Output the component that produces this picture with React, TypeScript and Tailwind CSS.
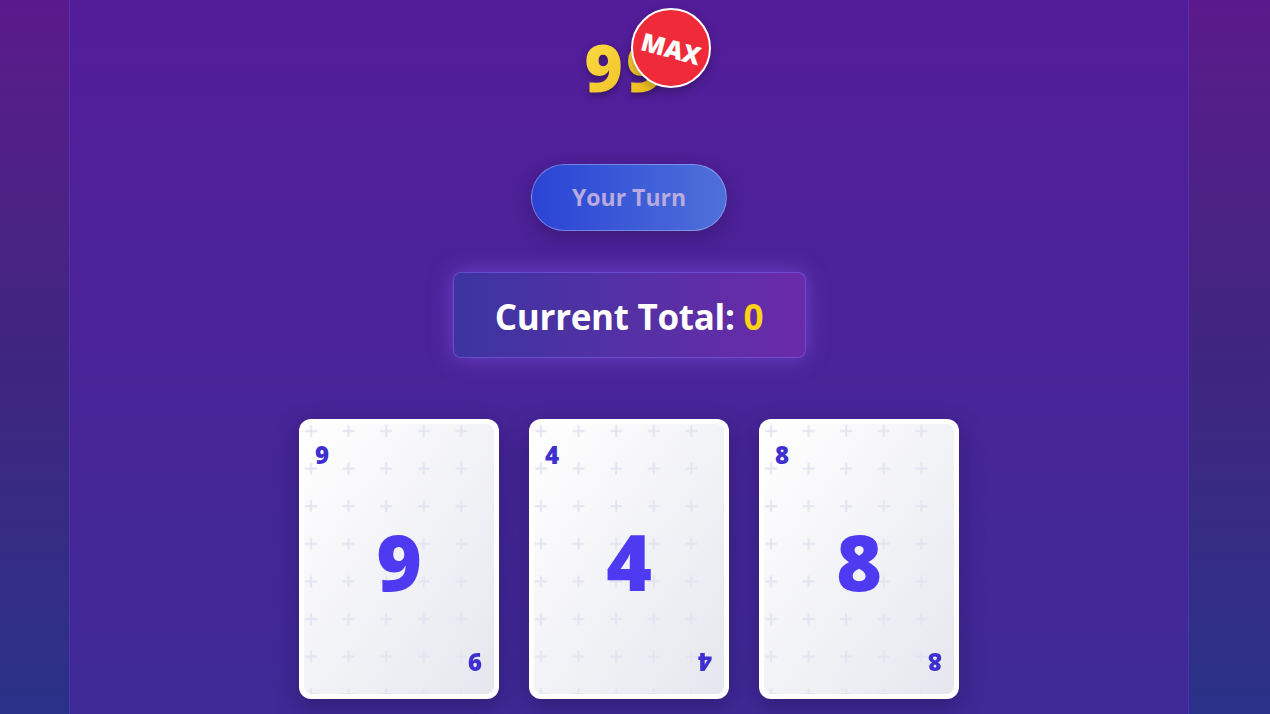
import React from "react";

const font = { fontFamily: '"Open Sans", "Noto Sans", sans-serif' };

const CardPattern = ({ id }: { id: string }) => (
  <svg className="absolute inset-0 h-full w-full" aria-hidden="true">
    <defs>
      <pattern id={id} x="-12" y="-12" width="37.6" height="37.6" patternUnits="userSpaceOnUse">
        <path d="M19 13v12M13 19h12" stroke="#e4e4f1" strokeWidth="2" />
      </pattern>
    </defs>
    <rect width="100%" height="100%" fill={`url(#${id})`} />
  </svg>
);

const Card = ({ value }: { value: number }) => (
  <div className="relative h-[280px] w-[200px] rounded-[12px] bg-white p-[5px] shadow-[0_8px_24px_rgba(20,10,60,0.35)]">
    <div className="relative h-full w-full overflow-hidden rounded-[8px] bg-gradient-to-br from-white to-[#e6e7ee]">
      <CardPattern id={`pat-${value}`} />
      <span className="absolute left-[11px] top-[19px] text-[24px] font-extrabold leading-none text-[#3d2fd0]">
        {value}
      </span>
      <div className="absolute inset-0 flex items-center justify-center pt-[4px]">
        <span className="text-[78px] font-extrabold leading-none text-[#4e3af0]">{value}</span>
      </div>
      <span className="absolute bottom-[20px] right-[12px] rotate-180 text-[24px] font-extrabold leading-none text-[#3d2fd0]">
        {value}
      </span>
    </div>
  </div>
);

export default function App() {
  return (
    <div
      style={font}
      className="h-[714px] w-full overflow-hidden bg-gradient-to-b from-[#5b1a8b] via-[#3f2680] to-[#2a3188]"
    >
      <div className="ml-[69px] flex h-full w-[1120px] flex-col items-center border-x border-[#5b3fd8]/50 bg-gradient-to-b from-[#531c99] to-[#3e2a96]">
        <div className="relative mr-[6px] mt-[26px]">
          <span className="bg-gradient-to-br from-[#fde047] to-[#eab308] bg-clip-text text-[66px] font-extrabold leading-[80px] tracking-[3px] text-transparent drop-shadow-[0_3px_3px_rgba(30,10,60,0.5)]">
            99
          </span>
          <div className="absolute left-[47px] top-[-18px] flex h-[80px] w-[80px] items-center justify-center rounded-full border-2 border-white bg-[#ef2b3a] shadow-[0_4px_10px_rgba(0,0,0,0.25)]">
            <span className="rotate-[15deg] text-[25px] font-extrabold leading-none text-white">MAX</span>
          </div>
        </div>

        <button className="mt-[58px] h-[67px] w-[196px] rounded-full border border-white/30 bg-gradient-to-r from-[#2a43d5] to-[#4f70d9] text-[23px] font-bold text-[#b9aae0] shadow-[0_6px_18px_rgba(20,10,60,0.3)]">
          Your Turn
        </button>

        <div className="mt-[41px] flex h-[86px] w-[353px] items-center justify-center rounded-[8px] border border-[#7358e0]/70 bg-gradient-to-r from-[#3c34a0] to-[#6a2aa9] pt-[4px] shadow-[0_0_22px_rgba(139,92,246,0.55)]">
          <span className="text-[35px] font-bold tracking-[-0.3px] text-white">
            Current Total: <span className="text-[#fcd116]">0</span>
          </span>
        </div>

        <div className="mt-[61px] flex gap-[30px]">
          <Card value={9} />
          <Card value={4} />
          <Card value={8} />
        </div>
      </div>
    </div>
  );
}
